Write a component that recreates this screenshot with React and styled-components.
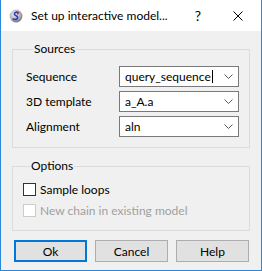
import React from 'react';
import styled, { createGlobalStyle } from 'styled-components';

const GlobalStyle = createGlobalStyle`
  html, body {
    margin: 0;
    padding: 0;
    background: #ffffff;
  }
  body {
    font-family: Lato, "Noto Sans", sans-serif;
    font-size: 12px;
    color: #000000;
  }
`;

const Window = styled.div`
  width: 262px;
  height: 271px;
  box-sizing: border-box;
  border: 1px solid #2b88d8;
  border-top: none;
  display: flex;
  flex-direction: column;
  background: #f0f0f0;
`;

const TitleBar = styled.div`
  height: 31px;
  flex: none;
  background: #ffffff;
  display: flex;
  align-items: center;
  padding-left: 8px;
`;

const TitleText = styled.span`
  margin-left: 8px;
  font-size: 12px;
  flex: 1;
  white-space: nowrap;
`;

const TitleButton = styled.span`
  width: ${(p) => p.w}px;
  display: flex;
  justify-content: center;
  align-items: center;
  font-size: 14px;
`;

const Body = styled.div`
  flex: 1;
  padding: 11px 11px 0 11px;
  display: flex;
  flex-direction: column;
`;

const Group = styled.fieldset`
  margin: ${(p) => (p.$first ? '0' : '11px 0 0 0')};
  border: 1px solid #dcdcdc;
  padding: ${(p) => p.$pad};
  min-width: 0;
`;

const Legend = styled.legend`
  margin-left: 7px;
  padding: 0 1px;
  line-height: 14px;
  font-size: 12px;
`;

const Rows = styled.div`
  display: grid;
  grid-template-columns: 93px 120px;
  row-gap: 4px;
  align-items: center;
`;

const Label = styled.span`
  line-height: 21px;
`;

const Combo = styled.div`
  height: 21px;
  box-sizing: border-box;
  border: 1px solid #7a7a7a;
  background: #ffffff;
  display: flex;
  align-items: center;
  padding-left: 5px;
  padding-right: 5px;
`;

const ComboText = styled.span`
  flex: 1;
  display: flex;
  align-items: center;
  white-space: nowrap;
`;

const Caret = styled.span`
  display: inline-block;
  width: 1px;
  height: 13px;
  background: #000000;
  margin-left: 1px;
`;

const CheckList = styled.div`
  display: flex;
  flex-direction: column;
  gap: 8px;
`;

const CheckRow = styled.label`
  display: flex;
  align-items: center;
  height: 13px;
  gap: 4px;
  color: ${(p) => (p.$disabled ? '#a0a0a0' : '#000000')};
`;

const Box = styled.span`
  width: 13px;
  height: 13px;
  box-sizing: border-box;
  border: 1px solid ${(p) => (p.$disabled ? '#cccccc' : '#333333')};
  background: #ffffff;
  flex: none;
`;

const ButtonRow = styled.div`
  display: flex;
  gap: 8px;
  padding-left: 2px;
  margin-top: 9px;
`;

const Button = styled.button`
  width: 73px;
  height: 22px;
  box-sizing: border-box;
  background: #e1e1e1;
  border: ${(p) => (p.$default ? '2px solid #0078d7' : '1px solid #adadad')};
  font-family: Lato, "Noto Sans", sans-serif;
  font-size: 12px;
  color: #000000;
  padding: 0;
`;

function AppIcon() {
  return (
    <svg width="14" height="14" viewBox="0 0 14 14">
      <defs>
        <radialGradient id="g" cx="0.4" cy="0.35" r="0.7">
          <stop offset="0" stopColor="#f2f2f2" />
          <stop offset="0.7" stopColor="#a8a8b0" />
          <stop offset="1" stopColor="#5c5c6c" />
        </radialGradient>
      </defs>
      <circle cx="7" cy="7" r="6.4" fill="url(#g)" />
      <path d="M9.6 3.6 C7.6 2.6 4.6 3.6 5.6 5.6 C6.4 7 9 6.6 8.6 8.8 C8.2 10.6 5.6 10.8 4.2 10" fill="none" stroke="#2c3fb8" strokeWidth="1.6" strokeLinecap="round" />
      <path d="M9.6 3.6 L8.4 5" stroke="#d0303a" strokeWidth="1.2" strokeLinecap="round" />
    </svg>
  );
}

function Chevron() {
  return (
    <svg width="9" height="5" viewBox="0 0 9 5">
      <path d="M0.5 0.5 L4.5 4.5 L8.5 0.5" fill="none" stroke="#5a5a5a" strokeWidth="1" />
    </svg>
  );
}

function CloseIcon() {
  return (
    <svg width="10" height="10" viewBox="0 0 10 10">
      <path d="M0.5 0.5 L9.5 9.5 M9.5 0.5 L0.5 9.5" stroke="#000000" strokeWidth="1" />
    </svg>
  );
}

const sources = [
  { label: 'Sequence', value: 'query_sequence', focused: true },
  { label: '3D template', value: 'a_A.a' },
  { label: 'Alignment', value: 'aln' },
];

export default function App() {
  return (
    <>
      <GlobalStyle />
      <Window>
        <TitleBar>
          <AppIcon />
          <TitleText>Set up interactive model...</TitleText>
          <TitleButton w={34}>?</TitleButton>
          <TitleButton w={46}>
            <CloseIcon />
          </TitleButton>
        </TitleBar>
        <Body>
          <Group $first $pad="10px 10px 10px 13px">
            <Legend>Sources</Legend>
            <Rows>
              {sources.map((s) => (
                <React.Fragment key={s.label}>
                  <Label>{s.label}</Label>
                  <Combo>
                    <ComboText>
                      {s.value}
                      {s.focused && <Caret />}
                    </ComboText>
                    <Chevron />
                  </Combo>
                </React.Fragment>
              ))}
            </Rows>
          </Group>
          <Group $pad="10px 10px 13px 10px">
            <Legend>Options</Legend>
            <CheckList>
              <CheckRow>
                <Box />
                Sample loops
              </CheckRow>
              <CheckRow $disabled>
                <Box $disabled />
                New chain in existing model
              </CheckRow>
            </CheckList>
          </Group>
          <ButtonRow>
            <Button $default>Ok</Button>
            <Button>Cancel</Button>
            <Button>Help</Button>
          </ButtonRow>
        </Body>
      </Window>
    </>
  );
}
